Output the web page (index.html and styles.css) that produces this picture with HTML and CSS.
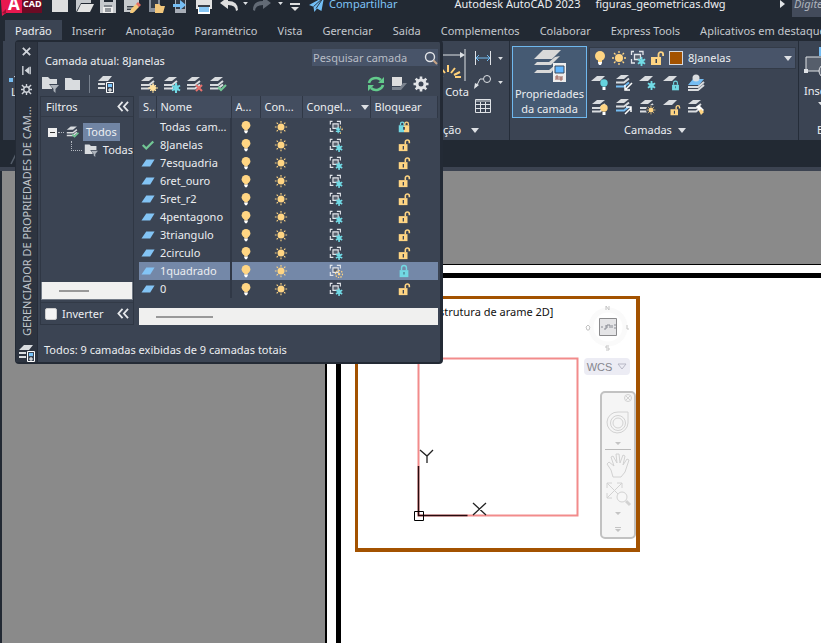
FILE: index.html
```html
<!DOCTYPE html>
<html lang="pt-BR">
<head>
<meta charset="utf-8">
<title>Autodesk AutoCAD 2023</title>
<link rel="stylesheet" href="styles.css">
</head>
<body>
<svg class="defs" aria-hidden="true">
  <symbol id="bulb" viewBox="0 0 16 16"><circle cx="8" cy="6" r="5" fill="#ffd583"/><path d="M6 10h4v2H6z" fill="#ffd583"/><path d="M6 12h4v1l-1 2H7l-1-2z" fill="#fff"/></symbol>
  <symbol id="sun" viewBox="0 0 16 16"><circle cx="8" cy="8" r="4" fill="#ffd583"/><path d="M8 1v2M8 13v2M1 8h2M13 8h2M3 3l1.500 1.500M11.500 11.500L13 13M13 3l-1.500 1.500M4.500 11.500L3 13" stroke="#ffd583" stroke-width="1.300"/></symbol>
  <symbol id="frame" viewBox="0 0 16 16"><path d="M4 1.500H1.500V5M9 1.500h4V5M1.500 9v4H5" fill="none" stroke="#e2e5ea" stroke-width="1.300"/><path d="M4.500 4.500h6v5h-6z" fill="#59616e" stroke="#e2e5ea" stroke-width="1.300"/></symbol>
  <symbol id="flake" viewBox="0 0 10 10"><circle cx="5" cy="5" r="3" fill="#4fa9b8"/><path d="M5 0v10M1 2.500l8 5M9 2.500l-8 5" stroke="#73dbe6" stroke-width="2"/></symbol>
  <symbol id="vpfreeze" viewBox="0 0 16 16"><use href="#frame"/><use href="#flake" x="7" y="7" width="9" height="9"/></symbol>
  <symbol id="vpmix" viewBox="0 0 16 16"><use href="#frame"/><use href="#flake" x="7" y="7" width="7" height="9"/><path d="M13 7v2M15 9v1M14 11h2M13 14v2" stroke="#ffd583"/></symbol>
  <symbol id="vpthaw" viewBox="0 0 16 16"><use href="#frame"/><circle cx="11.500" cy="11.500" r="4" fill="none" stroke="#ffd583" stroke-width="1.500" stroke-dasharray="1.500 1.500"/><circle cx="11.500" cy="11.500" r="1.500" fill="#ffd583"/></symbol>
  <symbol id="unlock" viewBox="0 0 16 16"><path d="M2 7h10v8H2z" fill="#ffd583"/><path d="M9.500 7V4.500a2.300 2.300 0 0 1 4.600 0V6" fill="none" stroke="#ffd583" stroke-width="1.800"/><path d="M6.500 9H8v4H6.500z" fill="#3b4453"/></symbol>
  <symbol id="lock" viewBox="0 0 16 16"><path d="M3 7h10v8H3z" fill="#72d8e3"/><path d="M5.200 7V4.500a2.800 2.800 0 0 1 5.600 0V7" fill="none" stroke="#72d8e3" stroke-width="1.600"/><path d="M7.500 9h1v3h-1z" fill="#365564"/></symbol>
  <symbol id="lockmix" viewBox="0 0 16 16"><path d="M2 6h6v8H2z" fill="#72d8e3"/><path d="M8 6h6v8H8z" fill="#ffd583"/><path d="M4 6V4.500a2 2 0 0 1 4 0V6" fill="none" stroke="#72d8e3" stroke-width="1.500"/><path d="M9 6V4.500a2 2 0 0 1 4 0V6" fill="none" stroke="#ffd583" stroke-width="1.500"/><path d="M7 8h2v3H7z" fill="#3b4453"/></symbol>
  <symbol id="sheet" viewBox="0 0 16 16"><path d="M6 4h9.500l-5 8H.500z" fill="#83c4f5"/></symbol>
  <symbol id="check" viewBox="0 0 16 16"><path d="M2 8l4 4 8-8" fill="none" stroke="#72c795" stroke-width="2.600"/></symbol>
  <symbol id="layers" viewBox="0 0 18 18"><path d="M6 2h8L9 6H1z" fill="#d9dcdf"/><path d="M1 10h8l5-4M1 13.500h8l5-4" fill="none" stroke="#d9dcdf" stroke-width="2"/></symbol>
  <symbol id="layersblue" viewBox="0 0 18 18"><path d="M6 1h8L9 5H1z" fill="#d9dcdf"/><path d="M1 8.500h8l5-4" fill="none" stroke="#d9dcdf" stroke-width="2"/><path d="M1 12.500h8l5-4" fill="none" stroke="#75bdf3" stroke-width="2"/></symbol>
  <symbol id="onesheet" viewBox="0 0 18 18"><path d="M6 2h8l-5 5H0z" fill="#d9dcdf"/></symbol>
  <symbol id="folder" viewBox="0 0 18 18"><path d="M1 3h6l2 2h7v10H1z" fill="#d9dcdf"/></symbol>
  <symbol id="folderfilter" viewBox="0 0 18 18"><path d="M1 2h6l2 2h7v5H8l3 4v1H1z" fill="#d9dcdf"/><path d="M9 10h9l-3.500 4v4L12.500 16v-2z" fill="#aeb4bc"/></symbol>
  <symbol id="stateman" viewBox="0 0 18 18"><path d="M6 1h9l-4 5H1zM1 8h7v2H1zM1 12h7v2H1z" fill="#d9dcdf"/><path d="M9.500 7.500h7v10h-7z" fill="#3c4655" stroke="#fff"/><path d="M11 9h4v3h-4z" fill="#79c4fb"/><path d="M11 15h4M13 13v4" stroke="#fff"/></symbol>
  <symbol id="chev" viewBox="0 0 14 12"><path d="M6.500 1L2 6l4.500 5M12.500 1L8 6l4.500 5" fill="none" stroke="#e6e8eb" stroke-width="2"/></symbol>
  <symbol id="gear" viewBox="0 0 16 16"><circle cx="8" cy="8" r="4" fill="none" stroke="#e2e4e7" stroke-width="3"/><g stroke="#e2e4e7" stroke-width="2.600"><path d="M8 .500v3M8 12.500v3M.500 8h3M12.500 8h3M2.700 2.700l2 2M11.300 11.300l2 2M13.300 2.700l-2 2M4.700 11.300l-2 2"/></g></symbol>
  <symbol id="caret" viewBox="0 0 8 5"><path d="M0 0h8L4 5z" fill="#dde0e4"/></symbol>
</svg>

<header class="titlebar">
  <span class="logo"><svg viewBox="0 0 42 34"><path d="M0 0h22v26H6l-4 3z" fill="#e9184f"/><path d="M22 0h20v26H22z" fill="#6b0b24"/><path d="M2 26l4-4v5z" fill="#9e1036"/></svg><b class="logo-a">A</b><b class="logo-cad">CAD</b></span>
  <nav class="quick" aria-label="Acesso rápido">
    <button aria-label="Novo"><svg viewBox="0 0 24 24"><path d="M4 2h10l6 6v12H4z" fill="#dedede"/><path d="M14 8h6v-1l-5-5" fill="#a8adb4"/></svg></button>
    <button aria-label="Abrir"><svg viewBox="0 0 24 24"><path d="M4 4h6l2 3h7v4H9L4 20z" fill="#c6c9cd"/><path d="M9 12h13l-4 8H5z" fill="#e3e3e3"/></svg></button>
    <button aria-label="Salvar"><svg viewBox="0 0 24 24"><path d="M4 4h16v17H4z" fill="#c6c9cd"/><path d="M8 4h9v6H8z" fill="#222933"/><path d="M7 15h10v6H7z" fill="#eee"/><path d="M8 14h8M9 17h6M9 19h6" stroke="#39404a"/></svg></button>
    <button aria-label="Salvar como"><svg viewBox="0 0 24 24"><path d="M4 4h15v10l-5 6H4z" fill="#c6c9cd"/><path d="M7 14h9v4H7z" fill="#39404a"/><path d="M7 16h8" stroke="#ddd"/><path d="M10 21l1-4 5-5 3 3-6 6z" fill="#f4c97a"/><path d="M16 12l2-2 3 3-2 2z" fill="#e66b5d"/></svg></button>
    <button aria-label="Abrir da web"><svg viewBox="0 0 24 24"><path d="M5 2h11v18H5z" fill="#8a919c"/><path d="M7 3h7v13H7z" fill="#353d49"/><path d="M11 12h4l2 2h4l-2 7h-8z" fill="#f2c77c"/></svg></button>
    <button aria-label="Salvar na web"><svg viewBox="0 0 24 24"><path d="M7 2h11v19H7z" fill="#a8aeb7"/><path d="M8 3h9v14H8z" fill="#353d49"/><path d="M5 12h7V8l6 5-6 5v-3H5z" fill="#76bff5"/></svg></button>
    <button aria-label="Plotar"><svg viewBox="0 0 24 24"><path d="M4 8h16v9H4z" fill="#e1e1e1"/><path d="M7 2h10v5H7zM6 15h12v7H6z" fill="#fff"/><path d="M6 13h12v2H6z" fill="#39404a"/><path d="M7 15h10v5H7z" fill="#87c7f5"/></svg></button>
    <button aria-label="Desfazer"><svg viewBox="0 0 24 24"><path d="M20 19q0-6-8-6v4l-8-6 8-6v4q10 0 10 9z" fill="#dedede"/></svg></button>
    <svg class="mini-caret"><use href="#caret"/></svg>
    <button aria-label="Refazer"><svg viewBox="0 0 24 24"><path d="M4 19q0-6 8-6v4l8-6-8-6v4Q2 9 2 18z" fill="#626a75"/></svg></button>
    <svg class="mini-caret"><use href="#caret"/></svg>
    <button class="custom" aria-label="Personalizar"><svg viewBox="0 0 12 24"><path d="M1 11h10v2H1zM2 15h8l-4 4z" fill="#dedede"/></svg></button>
  </nav>
  <button class="share"><svg viewBox="0 0 18 24"><path d="M0 13L17 4l-3 16-5-3-3 4-1-6z" fill="#72bef5"/><path d="M5 15L16 5 8 17" fill="none" stroke="#222933"/></svg>Compartilhar</button>
  <span class="app">Autodesk AutoCAD 2023</span>
  <span class="doc">figuras_geometricas.dwg</span>
  <svg class="search-arrow" viewBox="0 0 5 8"><path d="M0 0l5 4-5 4z" fill="#e2e4e7"/></svg>
  <input class="ask" aria-label="Pesquisa" placeholder="Digite">
</header>

<nav class="tabs" aria-label="Faixa de opções">
  <button class="active">Padrão</button><button>Inserir</button><button>Anotação</button><button>Paramétrico</button><button>Vista</button><button>Gerenciar</button><button>Saída</button><button>Complementos</button><button>Colaborar</button><button>Express Tools</button><button>Aplicativos em destaque</button>
</nav>

<section class="ribbon">
  <div class="panel draw"><svg viewBox="0 0 10 10"><path d="M1 4h4v4H1z" fill="#75bdf3"/><path d="M6 3l4-3" stroke="#dfe2e6"/></svg><span>L</span></div>
  <div class="panel notes">
    <div class="notes-main">
      <button class="dim"><svg viewBox="0 0 26 38"><path d="M0 9h22M25 3v32" stroke="#dfe2e6" fill="none"/><path d="M20 6l5 3-5 3z" fill="#dfe2e6"/><path d="M8 19v7M1 22l4 5M15 22l-4 5M-1 30l4 1M20 26l-6 3M21 31h-6" stroke="#ffd078" stroke-width="2"/></svg>Cota</button>
      <div class="notes-tools">
        <button aria-label="Linear"><svg viewBox="0 0 18 16"><path d="M1.500 1v14M16.500 1v14" stroke="#dfe2e6"/><path d="M2 8h14M5 5L2 8l3 3M13 5l3 3-3 3" stroke="#75bdf3" fill="none"/></svg><svg class="mini-caret"><use href="#caret"/></svg></button>
        <button aria-label="Chamada"><svg viewBox="0 0 18 16"><circle cx="13" cy="5" r="3.500" stroke="#dfe2e6" fill="none"/><path d="M9 5H6L2 13" stroke="#dfe2e6" fill="none"/><path d="M0 15l1-6 4 2z" fill="#dfe2e6"/></svg><svg class="mini-caret"><use href="#caret"/></svg></button>
        <button aria-label="Tabela"><svg viewBox="0 0 18 16"><path d="M1.500 1.500h15v13h-15zM2 3h14M2 6.500h14M2 10.500h14M6.500 4v10M11.500 4v10" stroke="#dfe2e6" fill="none"/></svg></button>
      </div>
    </div>
    <div class="panel-name">ção <svg><use href="#caret"/></svg></div>
  </div>
  <div class="panel layer-panel">
    <div class="layer-main">
      <button class="props"><svg viewBox="0 0 34 34"><path d="M10 1h18l-9 9H1z" fill="#d9d9d9"/><path d="M1 16h17l9-9-5 1-6 5H4zM1 24h17l3-4v-3l-5 4H4z" fill="#d9d9d9"/><path d="M20 14h13v19H20z" fill="#eee"/><path d="M22 17h9v7h-9z" fill="#61b6ff" stroke="#38485c"/><path d="M22 28h8M22 30h8M24 26v4M28 28v4" stroke="#9b5f56"/></svg>Propriedades<br>da camada</button>
      <div class="layer-side">
        <div class="combo"><svg><use href="#bulb"/></svg><svg><use href="#sun"/></svg><svg><use href="#vpfreeze"/></svg><svg><use href="#unlock"/></svg><i class="swatch"></i><select aria-label="Camada"><option>8Janelas</option></select><svg class="combo-caret"><use href="#caret"/></svg></div>
        <div class="tool-grid">
          <button aria-label="Desativar"><svg viewBox="0 0 18 18"><use href="#onesheet"/><circle cx="13" cy="9" r="3.700" fill="#65d2dc"/><path d="M11.500 13h3v3h-3z" fill="#fff"/></svg></button>
          <button aria-label="Isolar"><svg viewBox="0 0 18 18"><use href="#layersblue"/><path d="M17 9l-6 6M10 11v5h5" stroke="#fff" stroke-width="1.500" fill="none"/></svg></button>
          <button aria-label="Congelar"><svg viewBox="0 0 18 18"><use href="#onesheet"/><use href="#flake" x="8" y="7" width="9" height="9"/></svg></button>
          <button aria-label="Bloquear"><svg viewBox="0 0 18 18"><use href="#onesheet"/><use href="#lock" x="7" y="6" width="11" height="11"/></svg></button>
          <button aria-label="Tornar atual"><svg viewBox="0 0 18 18"><path d="M6 5h11l-5 6H1z" fill="#75bdf3"/><circle cx="9" cy="4" r="3.500" fill="#d9dcdf"/><path d="M1 13h10l6-5M1 16h10l6-5" stroke="#d9dcdf" stroke-width="2" fill="none"/></svg></button>
          <button aria-label="Ativar todas"><svg viewBox="0 0 18 18"><use href="#layers"/><circle cx="13" cy="10" r="3.700" fill="#ffd583"/><path d="M11.500 14h3v3h-3z" fill="#fff"/></svg></button>
          <button aria-label="Desisolar"><svg viewBox="0 0 18 18"><use href="#layersblue"/><path d="M10 16l6-6M11 9h5v5" stroke="#fff" stroke-width="1.500" fill="none"/></svg></button>
          <button aria-label="Descongelar todas"><svg viewBox="0 0 18 18"><use href="#layers"/><circle cx="12" cy="12" r="5" fill="#3b4453"/><use href="#sun" x="7" y="7" width="10" height="10"/></svg></button>
          <button aria-label="Desbloquear"><svg viewBox="0 0 18 18"><use href="#onesheet"/><use href="#unlock" x="6" y="6" width="12" height="12"/></svg></button>
          <button aria-label="Coincidir camada"><svg viewBox="0 0 18 18"><use href="#layers"/><path d="M9 9l3-2 5 5-3 3z" fill="#fff"/><path d="M12 13l2-2 3 3-3 3z" fill="#ffd583"/></svg></button>
        </div>
      </div>
    </div>
    <div class="panel-name center">Camadas <svg><use href="#caret"/></svg></div>
  </div>
  <div class="panel block">
    <button><svg viewBox="0 0 24 36"><path d="M2 10h22v14H2z" fill="#565e6b" stroke="#dfe2e6"/><path d="M0 22h4v4H0z" fill="#dfe2e6"/><path d="M15 0h9v9h-9z" fill="#75bdf3"/><circle cx="22" cy="24" r="7" fill="#646b78" stroke="#dfe2e6"/></svg>Inserir<svg class="mini-caret"><use href="#caret"/></svg></button>
    <div class="panel-name">Bloco</div>
  </div>
</section>
<div class="filetabs"><svg viewBox="0 0 8 12"><path d="M1 11L6 1" stroke="#555e6b" stroke-width="1.500"/></svg></div>

<main class="canvas">
  <div class="paper"><div class="margin">
    <div class="viewport">
      <span class="view-label">strutura de arame 2D]</span>
      <svg class="drawing" viewBox="0 0 278 249"><g fill="none"><path d="M60.500 59.500h159v157h-159z" stroke="#f28b8b" stroke-width="2"/><path d="M60.500 167v49.500h49" stroke="#260b0e" stroke-width="1.500"/><path d="M56.500 212.500h9v9h-9z" stroke="#000"/><path d="M62 151l7 6 6-6M69 157v7M115 204l13 12M128 204l-13 12" stroke="#222" stroke-width="1.300"/></g></svg>
      <div class="cube"><svg viewBox="0 0 48 48"><circle cx="24" cy="24" r="17" fill="none" stroke="#fafafa" stroke-width="5"/><path d="M15.500 15.500h17v17h-17z" fill="#e5e5e7" stroke="#8b8b8d"/><path d="M17 24h2M20 26h2v-4M23 25v-3h3v3M28 22v3M30 22h2M30 25h2" stroke="#888b93" fill="none"/><g fill="none" stroke="#c4c4c4"><path d="M22 7V3l3 4V3M43 22v4h2M25 43h-3v2h3v2h-3M2 24l2-2 2 2-1 3H3z"/></g></svg></div>
      <button class="wcs">WCS <svg viewBox="0 0 10 7"><path d="M1 1h8L5 6z" fill="none" stroke="#b7b7c5"/></svg></button>
      <div class="navbar"><svg viewBox="0 0 32 144"><g fill="none" stroke="#d2d2d2"><circle cx="26" cy="5" r="3.500"/><path d="M24 3l4 4M28 3l-4 4"/><path d="M16 19h10v11a10.500 10.500 0 1 1-10-11z"/><circle cx="16" cy="30" r="7.500"/><circle cx="16" cy="30" r="5"/><path d="M3 56.500h26" stroke="#bbb"/><path d="M9 77l-4-6 2-2 5 4-3-9 2-1 4 7-1-9h3l1 9 3-8 2 1-2 9 4-6 2 1-4 12-4 5h-8z"/><path d="M5 90l15 15M20 90L5 105M5 95v-5h5M15 90h5v5M5 100v5h5"/><circle cx="20" cy="104" r="5" fill="#f7f7f7"/><path d="M24 108l4 4" stroke-width="3"/></g><path d="M13 49h6l-3 3zM13 119h6l-3 3zM13 134h6v1h-6zM13 136h6l-3 3z" fill="#c4c4c4"/></svg></div>
    </div>
  </div></div>
</main>

<aside class="palette">
  <div class="rail">
    <button aria-label="Fechar"><svg viewBox="0 0 12 12"><path d="M2 2l8 8M10 2l-8 8" stroke="#d0d4da" stroke-width="2"/></svg></button>
    <button aria-label="Ocultar"><svg viewBox="0 0 12 12"><path d="M2 1v10M10 2v8" stroke="#d0d4da" stroke-width="1.500"/><path d="M4 6l5-4v8z" fill="#d0d4da"/></svg></button>
    <button aria-label="Propriedades"><svg viewBox="0 0 12 12"><circle cx="6" cy="6" r="3" fill="none" stroke="#d0d4da" stroke-width="1.500"/><path d="M6 0v3M6 9v3M0 6h3M9 6h3M1 1l3 3M8 8l3 3M11 1L8 4M4 8l-3 3" stroke="#d0d4da" stroke-width="1.500"/></svg></button>
    <span class="rail-title">GERENCIADOR DE PROPRIEDADES DE CAM...</span>
    <svg class="rail-icon"><use href="#stateman"/></svg>
  </div>
  <div class="manager">
    <div class="current"><span>Camada atual: 8Janelas</span><label class="find"><input type="text" aria-label="Pesquisar camada" placeholder="Pesquisar camada"><svg viewBox="0 0 14 14"><circle cx="6" cy="6" r="4.500" fill="none" stroke="#e2e4e7" stroke-width="1.400"/><path d="M9.500 9.500L13 13" stroke="#c8a486" stroke-width="2"/></svg></label></div>
    <div class="toolbar">
      <button aria-label="Novo filtro"><svg><use href="#folderfilter"/></svg></button>
      <button aria-label="Novo grupo"><svg><use href="#folder"/></svg></button>
      <i class="rule"></i>
      <button aria-label="Estados de camada"><svg><use href="#stateman"/></svg></button>
      <span class="spacer"></span>
      <button aria-label="Nova camada"><svg viewBox="0 0 18 18"><use href="#layers"/><circle cx="13" cy="13" r="3" fill="#ffe09c"/><path d="M13 8v10M8 13h10M10 10l6 6M16 10l-6 6" stroke="#ffe09c"/></svg></button>
      <button aria-label="Nova camada congelada"><svg viewBox="0 0 18 18"><use href="#layers"/><use href="#flake" x="8" y="8" width="10" height="10"/></svg></button>
      <button aria-label="Excluir camada"><svg viewBox="0 0 18 18"><use href="#layers"/><path d="M10 10l6 6M16 10l-6 6" stroke="#e7716c" stroke-width="2"/></svg></button>
      <button aria-label="Definir atual"><svg viewBox="0 0 18 18"><use href="#layers"/><path d="M9 12l3 3 5-5" fill="none" stroke="#72c795" stroke-width="2"/></svg></button>
      <span class="grow"></span>
      <button aria-label="Atualizar"><svg viewBox="0 0 18 18"><path d="M2 8a7 6 0 0 1 12-3M16 10a7 6 0 0 1-12 3" fill="none" stroke="#63cb8c" stroke-width="2.600"/><path d="M17 2v6h-6zM1 16v-6h6z" fill="#63cb8c"/></svg></button>
      <button aria-label="Substituições"><svg viewBox="0 0 18 18"><path d="M2 2h10v9H2z" fill="#dedede"/><path d="M13 8h4l-6 7H2v-3h8z" fill="#7a828d"/></svg></button>
      <button class="settings" aria-label="Configurações"><svg><use href="#gear"/></svg></button>
    </div>
    <div class="split">
      <div class="filters">
        <div class="filter-head">Filtros<svg><use href="#chev"/></svg></div>
        <div class="tree">
          <div class="node"><svg class="minus" viewBox="0 0 9 9"><path d="M0 0h9v9H0z" fill="#eee"/><path d="M2 4.500h5" stroke="#333"/></svg><i class="dots"></i><svg viewBox="0 0 18 18"><use href="#layers"/><path d="M8 12l3 3 5-5" fill="none" stroke="#72c795" stroke-width="2"/></svg><span class="chosen">Todos</span></div>
          <div class="node child"><i class="elbow"></i><svg><use href="#folderfilter"/></svg><span>Todas</span></div>
        </div>
        <div class="hscroll"><i></i></div>
        <div class="invert"><label><input type="checkbox">Inverter</label><svg><use href="#chev"/></svg></div>
      </div>
      <div class="list">
        <table>
          <colgroup><col class="c1"><col class="c2"><col class="c3"><col class="c4"><col class="c5"><col></colgroup>
          <thead><tr><th>S..</th><th>Nome</th><th>A...</th><th>Con...</th><th>Congel...<svg class="sort"><use href="#caret"/></svg></th><th>Bloquear</th></tr></thead>
          <tbody>
            <tr><td></td><td>Todas&nbsp; cam...</td><td><svg><use href="#bulb"/></svg></td><td><svg><use href="#sun"/></svg></td><td><svg><use href="#vpmix"/></svg></td><td><svg><use href="#lockmix"/></svg></td></tr>
            <tr><td><svg><use href="#check"/></svg></td><td>8Janelas</td><td><svg><use href="#bulb"/></svg></td><td><svg><use href="#sun"/></svg></td><td><svg><use href="#vpfreeze"/></svg></td><td><svg><use href="#unlock"/></svg></td></tr>
            <tr><td><svg><use href="#sheet"/></svg></td><td>7esquadria</td><td><svg><use href="#bulb"/></svg></td><td><svg><use href="#sun"/></svg></td><td><svg><use href="#vpfreeze"/></svg></td><td><svg><use href="#unlock"/></svg></td></tr>
            <tr><td><svg><use href="#sheet"/></svg></td><td>6ret_ouro</td><td><svg><use href="#bulb"/></svg></td><td><svg><use href="#sun"/></svg></td><td><svg><use href="#vpfreeze"/></svg></td><td><svg><use href="#unlock"/></svg></td></tr>
            <tr><td><svg><use href="#sheet"/></svg></td><td>5ret_r2</td><td><svg><use href="#bulb"/></svg></td><td><svg><use href="#sun"/></svg></td><td><svg><use href="#vpfreeze"/></svg></td><td><svg><use href="#unlock"/></svg></td></tr>
            <tr><td><svg><use href="#sheet"/></svg></td><td>4pentagono</td><td><svg><use href="#bulb"/></svg></td><td><svg><use href="#sun"/></svg></td><td><svg><use href="#vpfreeze"/></svg></td><td><svg><use href="#unlock"/></svg></td></tr>
            <tr><td><svg><use href="#sheet"/></svg></td><td>3triangulo</td><td><svg><use href="#bulb"/></svg></td><td><svg><use href="#sun"/></svg></td><td><svg><use href="#vpfreeze"/></svg></td><td><svg><use href="#unlock"/></svg></td></tr>
            <tr><td><svg><use href="#sheet"/></svg></td><td>2circulo</td><td><svg><use href="#bulb"/></svg></td><td><svg><use href="#sun"/></svg></td><td><svg><use href="#vpfreeze"/></svg></td><td><svg><use href="#unlock"/></svg></td></tr>
            <tr class="sel"><td><svg><use href="#sheet"/></svg></td><td>1quadrado</td><td><svg><use href="#bulb"/></svg></td><td><svg><use href="#sun"/></svg></td><td><svg><use href="#vpthaw"/></svg></td><td><svg><use href="#lock"/></svg></td></tr>
            <tr><td><svg><use href="#sheet"/></svg></td><td>0</td><td><svg><use href="#bulb"/></svg></td><td><svg><use href="#sun"/></svg></td><td><svg><use href="#vpfreeze"/></svg></td><td><svg><use href="#unlock"/></svg></td></tr>
          </tbody>
        </table>
        <div class="list-scroll"><i></i></div>
      </div>
    </div>
    <div class="status">Todos: 9 camadas exibidas de 9 camadas totais</div>
  </div>
</aside>
</body>
</html>
```
FILE: styles.css
```css
* { box-sizing: border-box; }
html, body { height: 100%; }
body {
  margin: 0;
  display: flex;
  flex-direction: column;
  overflow: hidden;
  position: relative;
  background: #222933;
  color: #eceef1;
  font: 11px/16px "Noto Sans", "Open Sans", sans-serif;
}
button { border: 0; padding: 0; background: none; color: inherit; font: inherit; }
svg { display: block; flex: none; }
.defs { position: absolute; width: 0; height: 0; }
.mini-caret { width: 5px; height: 3px; }

/* Title bar */
.titlebar { flex: none; height: 33px; margin-top: -13px; display: flex; align-items: center; white-space: nowrap; }
.logo { position: relative; width: 48px; height: 34px; flex: none; align-self: flex-start; }
.logo svg { width: 42px; height: 34px; }
.logo b { position: absolute; line-height: 16px; color: #fff; }
.logo-a { left: 8px; top: 9px; font-size: 17px; }
.logo-cad { left: 23px; top: 9px; font-size: 9px; }
.quick { display: flex; align-items: center; flex: none; }
.quick button svg { width: 24px; height: 24px; }
.quick .mini-caret { margin: 0 3px; }
.quick .custom { padding-left: 3px; }
.quick .custom svg { width: 12px; }
.share { display: flex; align-items: center; gap: 4px; margin-left: 8px; color: #7fc4f7; }
.share svg { width: 16px; height: 24px; }
.app { margin-left: 57px; }
.doc { margin-left: 15px; }
.search-arrow { width: 5px; height: 8px; margin-left: auto; }
.ask { width: 29px; height: 26px; margin-left: 7px; padding: 0 0 0 2px; border: 0; background: #434b5b; font: italic 11px/16px "Noto Sans", sans-serif; }
.ask::placeholder { color: #aeb3bc; opacity: 1; }

/* Ribbon tabs */
.tabs { flex: none; display: flex; height: 21px; padding-left: 5px; white-space: nowrap; overflow: hidden; color: #c4c8ce; }
.tabs button { flex: none; padding: 0 10px; line-height: 20px; }
.tabs .active { background: #3b4453; color: #eceef1; }

/* Ribbon */
.ribbon { flex: none; display: flex; height: 99px; margin-left: 3px; background: #3b4453; overflow: hidden; white-space: nowrap; }
.panel { display: flex; flex-direction: column; flex: none; border-right: 1px solid #252d39; }
.draw { width: 430px; padding: 33px 0 0 5px; border: 0; }
.draw svg { width: 10px; height: 10px; }
.draw span { padding-left: 3px; }
.notes { width: 77px; }
.notes-main { display: flex; flex: 1; padding: 5px 0 0 7px; }
.dim { width: 34px; display: flex; flex-direction: column; justify-content: flex-start; }
.dim svg { width: 26px; height: 38px; }
.notes-tools { display: flex; flex-direction: column; gap: 8px; padding-top: 4px; }
.notes-tools button { display: flex; align-items: center; gap: 6px; }
.notes-tools button > svg:first-child { width: 18px; height: 16px; }
.panel-name { display: flex; align-items: center; gap: 6px; height: 20px; padding-left: 10px; }
.panel-name svg { width: 8px; height: 5px; }
.notes .panel-name { gap: 10px; }
.center { justify-content: center; padding: 0; }
.layer-panel { width: 289px; padding-left: 2px; }
.layer-main { flex: 1; display: flex; gap: 2px; padding-top: 5px; }
.props { width: 75px; height: 72px; border: 1px solid #6fb8ee; background: #455a73; text-align: center; line-height: 15px; }
.props svg { width: 34px; height: 34px; margin: 0 auto 3px; }
.layer-side { flex: 1; padding-right: 2px; }
.combo { display: flex; align-items: center; gap: 3px; height: 22px; margin-top: 1px; padding: 0 3px 0 2px; background: #485469; border: 1px solid #333b48; }
.combo svg { width: 16px; height: 16px; }
.swatch { width: 14px; height: 14px; margin: 0 1px; background: #a35200; border: 1px solid #d5dae1; }
.combo select { flex: 1; min-width: 0; appearance: none; border: 0; padding: 0 0 0 1px; background: none; color: inherit; font: inherit; }
.combo .combo-caret { width: 8px; height: 5px; }
.tool-grid { display: grid; grid-template-columns: repeat(5, 24px); grid-auto-rows: 24px; padding: 2px 0 0 2px; }
.tool-grid svg { width: 18px; height: 18px; }
.block { flex: 1; padding: 6px 0 0 5px; border: 0; justify-content: space-between; }
.block button { text-align: left; }
.block button svg:first-child { width: 24px; height: 36px; }
.block button .mini-caret { margin: 3px 0 0 14px; }
.block .panel-name { padding-left: 13px; }
.filetabs { flex: none; height: 31px; padding: 13px 0 0 10px; border-bottom: 4px solid #3c4351; }
.filetabs svg { width: 8px; height: 12px; }

/* Layout sheet */
.canvas { flex: 1; min-height: 0; display: flex; margin-left: 2px; padding: 93px 0 0 323px; background: #8a8a8a; overflow: hidden; }
.paper { flex: 1; padding: 8px 0 0 9px; background: #fff; border: solid #000; border-width: 1px 0 0 2px; }
.margin { height: 100%; padding: 18px 0 0 14px; border: solid #000; border-width: 5px 0 0 5px; }
.viewport { position: relative; width: 285px; height: 256px; border: 4px solid #a35200; border-width: 3px 4px 4px 3px; color: #111; }
.view-label { position: absolute; left: 81px; top: 5px; }
.drawing { width: 278px; height: 249px; }
.cube { position: absolute; left: 226px; top: 4px; }
.cube svg { width: 48px; height: 48px; }
.wcs { position: absolute; left: 226px; top: 59px; width: 46px; height: 17px; display: flex; align-items: center; justify-content: center; gap: 5px; border-radius: 4px; background: #ececf4; color: #85858d; font: 11px/16px "Liberation Sans", sans-serif; }
.wcs svg { width: 10px; height: 7px; }
.navbar { position: absolute; left: 242px; top: 92px; border: 2px solid #c2c2c2; border-radius: 5px; background: #f5f5f5; }
.navbar svg { width: 32px; height: 144px; }

/* Layer manager palette */
.palette { position: absolute; left: 15px; top: 40px; display: flex; width: 428px; border: 1px solid #232a35; border-width: 2px 3px 2px 1px; border-radius: 4px; background: #3b4453; white-space: nowrap; }
.rail { flex: none; width: 22px; display: flex; flex-direction: column; align-items: center; background: #2d3440; border-right: 1px solid #262d39; }
.rail button { height: 19px; }
.rail button svg { width: 11px; height: 11px; }
.rail-title { flex: 1; padding-top: 8px; writing-mode: vertical-rl; transform: rotate(180deg); line-height: 16px; color: #bfc4cb; }
.rail-icon { width: 18px; height: 18px; }
.manager { flex: 1; min-width: 0; padding-left: 2px; }
.current { display: flex; justify-content: space-between; align-items: flex-end; height: 27px; padding: 0 2px 0 5px; }
.find { display: flex; align-items: center; width: 126px; height: 17px; margin-bottom: 3px; background: #485469; }
.find input { flex: 1; min-width: 0; border: 0; padding: 0 0 0 1px; background: none; color: #fff; font: inherit; }
.find input::placeholder { color: #b8bdc6; opacity: 1; }
.find svg { width: 14px; height: 14px; }
.toolbar { display: flex; align-items: center; gap: 5px; height: 27px; padding: 3px 11px 0 1px; }
.toolbar svg { width: 18px; height: 18px; }
.toolbar .settings svg { width: 16px; height: 16px; }
.rule { width: 1px; height: 18px; margin: 0 2px; background: #77808d; }
.spacer { width: 15px; }
.grow { flex: 1; }
.split { display: flex; gap: 5px; height: 229px; padding-right: 2px; }
.filters { flex: none; width: 94px; display: flex; flex-direction: column; border: 1px solid #2f3744; }
.filter-head { display: flex; align-items: center; justify-content: space-between; height: 20px; padding: 0 3px 0 5px; border-bottom: 1px solid #323a47; }
.filter-head svg, .invert svg { width: 14px; height: 11px; }
.tree { flex: 1; padding-top: 6px; overflow: hidden; }
.node { display: flex; align-items: center; height: 18px; padding-left: 7px; }
.node svg { width: 14px; height: 14px; }
.node .minus { width: 9px; height: 9px; }
.dots { width: 6px; margin: 0 2px 0 1px; border-top: 1px dotted #b3b8c0; }
.chosen { margin-left: 3px; padding: 0 3px; line-height: 18px; background: #7185a4; }
.child { padding-left: 30px; }
.elbow { width: 12px; height: 10px; margin: 0 2px 8px 0; border: dotted #b3b8c0; border-width: 0 0 1px 1px; }
.child span { margin-left: 5px; }
.hscroll { height: 18px; padding: 8px 17px; border: 1px solid #737b87; border-top: 0; background: #f1f1f0; }
.hscroll i, .list-scroll i { display: block; width: 30px; height: 2px; background: #999; }
.invert { display: flex; justify-content: space-between; align-items: center; height: 22px; margin-top: 2px; padding: 0 3px 0 4px; border-top: 1px solid #323a47; }
.invert label { display: flex; align-items: center; gap: 5px; }
.invert input { appearance: none; width: 12px; height: 12px; margin: 0; border: 1px solid #ccc; border-radius: 2px; background: #f4f4f4; }
.list { flex: 1; min-width: 0; display: flex; flex-direction: column; justify-content: space-between; }
table { width: 100%; table-layout: fixed; border-collapse: collapse; }
.c1 { width: 17px; }
.c2 { width: 75px; }
.c3 { width: 29px; }
.c4 { width: 42px; }
.c5 { width: 68px; }
th { position: relative; height: 22px; padding: 0 0 0 4px; overflow: hidden; text-align: left; font-weight: 400; background: #434d5f; border-right: 1px solid #303846; }
.sort { position: absolute; right: 1px; top: 9px; width: 8px; height: 5px; }
td { height: 18px; padding: 0; overflow: hidden; line-height: 16px; }
td:nth-child(2) { padding-left: 4px; border-right: 2px solid #303846; }
td svg { width: 14px; height: 14px; margin: 0 auto; }
.sel { background: #7488a8; }
.list-scroll { height: 17px; padding: 8px 17px; background: #f0f0ef; }
.list-scroll i { width: 57px; }
.status { height: 37px; padding: 17px 0 0 4px; }
```
